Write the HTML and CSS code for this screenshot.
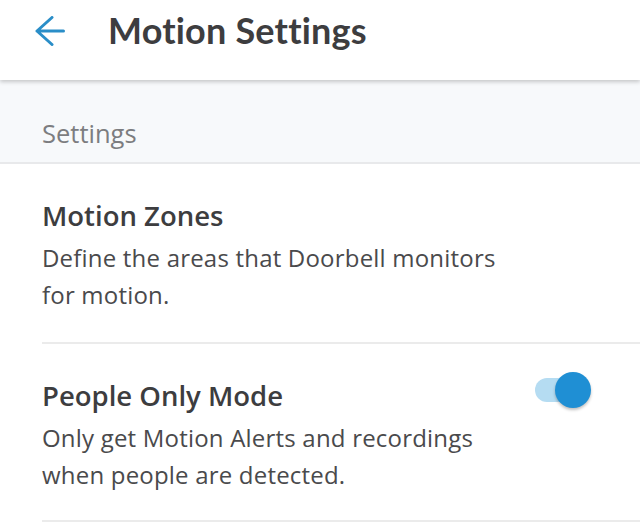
FILE: index.html
```html
<!DOCTYPE html>
<html>
<head>
<meta charset="utf-8">
<link rel="stylesheet" href="styles.css">
</head>
<body>
<header class="topbar">
  <svg class="back" width="30" height="30" viewBox="0 0 30 30" aria-hidden="true">
    <path d="M28.5 15H2 M17 1.5L2 15L17 28.5" fill="none" stroke="#2a8ec8" stroke-width="3" stroke-linecap="round" stroke-linejoin="round"/>
  </svg>
  <h1 class="title">Motion Settings</h1>
</header>
<div class="section-label">Settings</div>
<div class="item">
  <div class="item-text">
    <div class="item-title">Motion Zones</div>
    <div class="item-desc">Define the areas that Doorbell monitors<br>for motion.</div>
  </div>
</div>
<div class="item">
  <div class="item-text">
    <div class="item-title">People Only Mode</div>
    <div class="item-desc">Only get Motion Alerts and recordings<br>when people are detected.</div>
  </div>
  <div class="toggle"><span class="knob"></span></div>
</div>
</body>
</html>
```
FILE: styles.css
```css
html, body {
  margin: 0;
  padding: 0;
  background: #ffffff;
  font-family: "Open Sans", "Noto Sans", sans-serif;
  overflow: hidden;
}
.topbar {
  height: 80px;
  box-sizing: border-box;
  display: flex;
  align-items: flex-start;
  padding-left: 35px;
  background: #ffffff;
  box-shadow: 0 2px 4px rgba(0,0,0,0.2);
  position: relative;
  z-index: 1;
}
.back {
  display: block;
  margin-top: 16px;
}
.title {
  margin: 9px 0 0 43px;
  font-family: "Lato", "Open Sans", sans-serif;
  font-size: 36px;
  line-height: 43px;
  font-weight: 700;
  color: #3d3d3f;
  letter-spacing: 0.2px;
}
.section-label {
  height: 84px;
  box-sizing: border-box;
  background: #f7f9fb;
  border-bottom: 2px solid #e8e9eb;
  padding: 39px 0 0 42px;
  font-size: 25.5px;
  color: #7c7d80;
  line-height: 28px;
}
.item {
  margin-left: 42px;
  border-bottom: 2px solid #ebebeb;
  display: flex;
  align-items: flex-start;
  height: 180px;
  box-sizing: border-box;
  padding-top: 35px;
}
.item + .item {
  height: 178px;
}
.item-text {
  flex: 1;
  white-space: nowrap;
}
.item-title {
  font-size: 27.5px;
  font-weight: 600;
  color: #3d3d3f;
  line-height: 34px;
}
.item-desc {
  margin-top: 6px;
  font-size: 24px;
  letter-spacing: 0.2px;
  color: #4a4a4c;
  line-height: 37px;
}
.toggle {
  position: relative;
  width: 48px;
  height: 24px;
  border-radius: 12px;
  background: #b5dcf2;
  margin: -1px 57px 0 0;
}
.knob {
  position: absolute;
  left: 20px;
  top: -6px;
  width: 36px;
  height: 36px;
  border-radius: 50%;
  background: #1f8fd4;
  box-shadow: 0 2px 3px rgba(0,0,0,0.25);
}
```
